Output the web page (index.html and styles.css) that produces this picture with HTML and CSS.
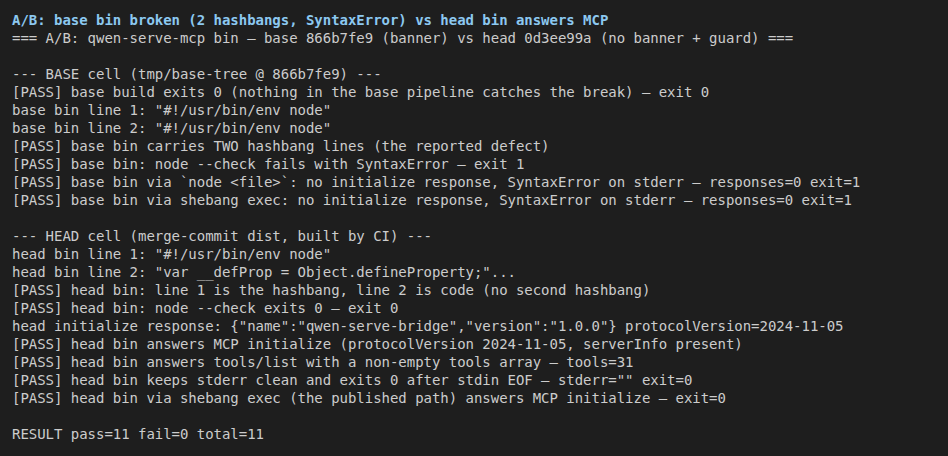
FILE: index.html
```html
<!DOCTYPE html>
<html>
<head>
<meta charset="utf-8">
<link rel="stylesheet" href="styles.css">
</head>
<body>
<div class="term">
<div class="title">A/B: base bin broken (2 hashbangs, SyntaxError) vs head bin answers MCP</div>
<pre class="out">=== A/B: qwen-serve-mcp bin — base 866b7fe9 (banner) vs head 0d3ee99a (no banner + guard) ===

--- BASE cell (tmp/base-tree @ 866b7fe9) ---
[PASS] base build exits 0 (nothing in the base pipeline catches the break) — exit 0
base bin line 1: "#!/usr/bin/env node"
base bin line 2: "#!/usr/bin/env node"
[PASS] base bin carries TWO hashbang lines (the reported defect)
[PASS] base bin: node --check fails with SyntaxError — exit 1
[PASS] base bin via `node &lt;file&gt;`: no initialize response, SyntaxError on stderr — responses=0 exit=1
[PASS] base bin via shebang exec: no initialize response, SyntaxError on stderr — responses=0 exit=1

--- HEAD cell (merge-commit dist, built by CI) ---
head bin line 1: "#!/usr/bin/env node"
head bin line 2: "var __defProp = Object.defineProperty;"...
[PASS] head bin: line 1 is the hashbang, line 2 is code (no second hashbang)
[PASS] head bin: node --check exits 0 — exit 0
head initialize response: {"name":"qwen-serve-bridge","version":"1.0.0"} protocolVersion=2024-11-05
[PASS] head bin answers MCP initialize (protocolVersion 2024-11-05, serverInfo present)
[PASS] head bin answers tools/list with a non-empty tools array — tools=31
[PASS] head bin keeps stderr clean and exits 0 after stdin EOF — stderr="" exit=0
[PASS] head bin via shebang exec (the published path) answers MCP initialize — exit=0

RESULT pass=11 fail=0 total=11</pre>
</div>
</body>
</html>
```
FILE: styles.css
```css
html, body {
  margin: 0;
  padding: 0;
  background: #1e1e1e;
}
.term {
  width: 948px;
  height: 456px;
  box-sizing: border-box;
  padding: 11px 12px 0 12px;
  background: #1e1e1e;
  color: #cccccc;
  font-family: "DejaVu Sans Mono", monospace;
  font-size: 14px;
  line-height: 18px;
  letter-spacing: -0.03px;
  overflow: hidden;
}
.title {
  color: #8cc8f0;
  font-weight: bold;
  white-space: pre;
}
.out {
  margin: 0;
  font: inherit;
  letter-spacing: inherit;
  white-space: pre;
}
```
